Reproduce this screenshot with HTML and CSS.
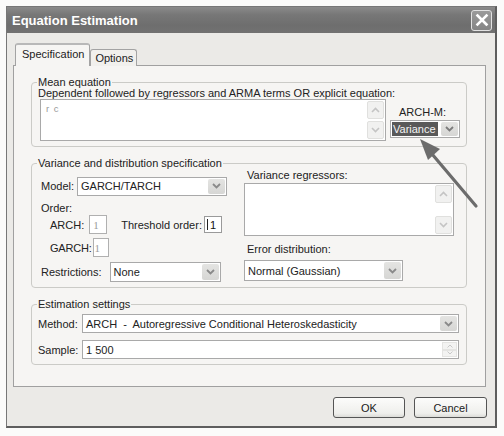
FILE: index.html
```html
<!DOCTYPE html>
<html>
<head>
<meta charset="utf-8">
<title>Equation Estimation</title>
<link rel="stylesheet" href="styles.css">
</head>
<body>
<div class="dialog">
  <div class="titlebar">
    <span class="title">Equation Estimation</span>
    <span class="close"><svg width="14" height="14" viewBox="0 0 14 14"><path d="M2.5 2.5 L11.5 11.5 M11.5 2.5 L2.5 11.5" stroke="#fff" stroke-width="2.6" stroke-linecap="square"/></svg></span>
  </div>
  <div class="body">
    <div class="tabs">
      <div class="tab active">Specification</div>
      <div class="tab">Options</div>
    </div>
    <div class="panel">
      <fieldset class="group mean">
        <legend>Mean equation</legend>
        <div class="desc">Dependent followed by regressors and ARMA terms OR explicit equation:</div>
        <div class="mean-row">
          <div class="field eq">
            <span class="eq-text">r c</span>
            <div class="vscroll">
              <span class="sbtn"><svg width="9" height="6" viewBox="0 0 9 6"><path d="M1 5 L4.5 1.5 L8 5" fill="none" stroke="#c4c4c4" stroke-width="1.6"/></svg></span>
              <span class="sbtn"><svg width="9" height="6" viewBox="0 0 9 6"><path d="M1 1 L4.5 4.5 L8 1" fill="none" stroke="#c4c4c4" stroke-width="1.6"/></svg></span>
            </div>
          </div>
          <div class="archm">
            <div class="archm-label">ARCH-M:</div>
            <div class="combo archm-combo">
              <span class="combo-val"><span class="sel">Variance</span></span>
              <span class="combo-btn"><svg width="9" height="6" viewBox="0 0 9 6"><path d="M1 1 L4.5 4.5 L8 1" fill="none" stroke="#7c7c7c" stroke-width="1.8"/></svg></span>
            </div>
          </div>
        </div>
      </fieldset>

      <fieldset class="group variance">
        <legend>Variance and distribution specification</legend>
        <div class="var-cols">
          <div class="var-left">
            <div class="row model-row">
              <span class="lbl">Model:</span>
              <div class="combo model-combo">
                <span class="combo-val">GARCH/TARCH</span>
                <span class="combo-btn"><svg width="9" height="6" viewBox="0 0 9 6"><path d="M1 1 L4.5 4.5 L8 1" fill="none" stroke="#8a8a8a" stroke-width="1.8"/></svg></span>
              </div>
            </div>
            <div class="order-lbl">Order:</div>
            <div class="row arch-row">
              <span class="lbl ind arch-lbl">ARCH:</span>
              <span class="num dim arch-in">1</span>
              <span class="lbl thr-lbl">Threshold order:</span>
              <span class="num thr-in"><span class="caret"></span>1</span>
            </div>
            <div class="row garch-row">
              <span class="lbl ind garch-lbl">GARCH:</span>
              <span class="num dim garch-in">1</span>
            </div>
            <div class="row restr-row">
              <span class="lbl restr-lbl">Restrictions:</span>
              <div class="combo restr-combo">
                <span class="combo-val">None</span>
                <span class="combo-btn"><svg width="9" height="6" viewBox="0 0 9 6"><path d="M1 1 L4.5 4.5 L8 1" fill="none" stroke="#8a8a8a" stroke-width="1.8"/></svg></span>
              </div>
            </div>
          </div>
          <div class="var-right">
            <div class="rlbl vr-lbl">Variance regressors:</div>
            <div class="field listbox">
              <div class="vscroll">
                <span class="sbtn"><svg width="9" height="6" viewBox="0 0 9 6"><path d="M1 5 L4.5 1.5 L8 5" fill="none" stroke="#c4c4c4" stroke-width="1.6"/></svg></span>
                <span class="sbtn"><svg width="9" height="6" viewBox="0 0 9 6"><path d="M1 1 L4.5 4.5 L8 1" fill="none" stroke="#c4c4c4" stroke-width="1.6"/></svg></span>
              </div>
            </div>
            <div class="rlbl ed-lbl">Error distribution:</div>
            <div class="combo err-combo">
              <span class="combo-val">Normal (Gaussian)</span>
              <span class="combo-btn"><svg width="9" height="6" viewBox="0 0 9 6"><path d="M1 1 L4.5 4.5 L8 1" fill="none" stroke="#8a8a8a" stroke-width="1.8"/></svg></span>
            </div>
          </div>
        </div>
      </fieldset>

      <fieldset class="group est">
        <legend>Estimation settings</legend>
        <div class="row method-row">
          <span class="lbl est-lbl">Method:</span>
          <div class="combo method-combo">
            <span class="combo-val">ARCH&nbsp; -&nbsp; Autoregressive Conditional Heteroskedasticity</span>
            <span class="combo-btn"><svg width="9" height="6" viewBox="0 0 9 6"><path d="M1 1 L4.5 4.5 L8 1" fill="none" stroke="#8a8a8a" stroke-width="1.8"/></svg></span>
          </div>
        </div>
        <div class="row sample-row">
          <span class="lbl est-lbl">Sample:</span>
          <div class="field sample">
            <span class="combo-val">1 500</span>
            <span class="spin">
              <span class="spin-b"><svg width="6" height="4" viewBox="0 0 6 4"><path d="M0.5 3.5 L3 1 L5.5 3.5" fill="none" stroke="#c8c8c8" stroke-width="1"/></svg></span>
              <span class="spin-b"><svg width="6" height="4" viewBox="0 0 6 4"><path d="M0.5 0.5 L3 3 L5.5 0.5" fill="none" stroke="#c8c8c8" stroke-width="1"/></svg></span>
            </span>
          </div>
        </div>
      </fieldset>
    </div>
    <div class="buttons">
      <button class="btn">OK</button>
      <button class="btn">Cancel</button>
    </div>
  </div>
</div>
<svg class="pointer" width="504" height="436" viewBox="0 0 504 436">
  <line x1="476" y1="206" x2="432" y2="154" stroke="#6c6c6c" stroke-width="3.2" stroke-linecap="round"/>
  <polygon points="420,139 440,149 428,160" fill="#6c6c6c"/>
</svg>
</body>
</html>
```

FILE: styles.css
```css
* { box-sizing: border-box; }
html, body { margin: 0; padding: 0; background: #fbfbfa; }
body {
  position: relative;
  width: 504px;
  height: 436px;
  overflow: hidden;
  font-family: "Liberation Sans", Arial, sans-serif;
  font-size: 11px;
  color: #222;
}
.dialog {
  margin: 6px 0 0 6px;
  width: 491px;
  height: 422px;
  border: 1px solid #777;
  border-right: 2px solid #5e5e5e;
  border-bottom: 2px solid #5e5e5e;
  background: #ebeae7;
  display: flex;
  flex-direction: column;
}
.titlebar {
  height: 26px;
  flex: none;
  background: linear-gradient(#8a8a8a, #777 30%, #6e6e6e 70%, #727272);
  display: flex;
  align-items: center;
  justify-content: space-between;
  padding: 0 3px 0 5px;
}
.title {
  color: #fff;
  font-weight: bold;
  font-size: 13px;
}
.close {
  width: 21px;
  height: 21px;
  border: 1px solid #e2e2e2;
  border-radius: 3px;
  background: linear-gradient(#9a9a9a, #858585);
  display: flex;
  align-items: center;
  justify-content: center;
}
.body {
  flex: 1;
  padding: 10px 9px 0 6px;
  display: flex;
  flex-direction: column;
}
.tabs {
  display: flex;
  align-items: flex-end;
  height: 23px;
  margin-bottom: -1px;
  position: relative;
  z-index: 1;
}
.tab {
  height: 17px;
  border: 1px solid #a3a3a3;
  border-bottom: none;
  border-radius: 3px 3px 0 0;
  background: #f1f0ed;
  padding: 2px 3px 0 4px;
  line-height: 13px;
}
.tab.active {
  height: 23px;
  margin-left: 2px;
  margin-right: 0;
  padding: 3px 5px 0 6px;
  background: #f6f5f3;
  border-top: 2px solid #b8b8b8;
}
.panel {
  height: 322px;
  border: 1px solid #a0a0a0;
  background: #f6f5f3;
  padding: 10px 0 0 17px;
}
.group {
  margin: 0;
  min-width: 0;
  width: 436px;
  border: 1px solid #cbcbc7;
  border-radius: 4px;
  padding: 0 6px 5px 6px;
}
.group legend {
  padding: 0 1px;
  margin-left: -1px;
  line-height: 13px;
}
.variance, .est { margin-top: 10px; }

.desc { line-height: 12px; margin-top: -2px; position: relative; z-index: 1; }
.mean-row { display: flex; margin-top: 0; }
.field {
  background: #fff;
  border: 1px solid #a9a9a9;
  position: relative;
}
.eq {
  margin-left: 2px;
  width: 347px;
  height: 42px;
  display: flex;
  justify-content: space-between;
}
.eq-text {
  font-family: "Liberation Sans", Arial, sans-serif;
  font-size: 9.5px;
  color: #9a9a9a;
  padding: 3px 0 0 5px;
  letter-spacing: 1px;
}
.vscroll {
  width: 18px;
  display: flex;
  flex-direction: column;
  justify-content: space-between;
  padding: 1px 1px 1px 0;
}
.sbtn {
  height: 18px;
  display: flex;
  align-items: center;
  justify-content: center;
  background: #f1f1f0;
  border: 1px solid #e0e0de;
  border-radius: 2px;
}
.archm { margin-left: 4px; display: flex; flex-direction: column; }
.archm-label { line-height: 13px; margin: 7px 0 0 9px; }
.combo {
  display: flex;
  align-items: stretch;
  background: #fff;
  border: 1px solid #a9a9a9;
  height: 20px;
}
.combo-val {
  flex: 1;
  display: flex;
  align-items: center;
  padding-left: 3px;
  white-space: nowrap;
  overflow: hidden;
}
.combo-btn {
  width: 17px;
  margin: 1px;
  background: linear-gradient(#e4e4e2, #d6d6d4);
  border-radius: 2px;
  display: flex;
  align-items: center;
  justify-content: center;
}
.archm-combo { width: 70px; height: 18px; margin-top: 1px; }
.archm-combo .combo-val { padding-left: 1px; }
.sel {
  background: #595959;
  color: #f4f4f4;
  padding: 0 2px 0 1px;
  line-height: 14px;
}

.var-cols { display: flex; }
.var-left { width: 206px; display: flex; flex-direction: column; padding-left: 3px; }
.var-right { width: 210px; display: flex; flex-direction: column; }
.row { display: flex; align-items: center; }
.model-row { margin-top: 6px; height: 20px; }
.model-combo { width: 150px; margin-left: 3px; height: 19px; }
.order-lbl { line-height: 13px; margin-top: 6px; }
.ind { margin-left: 9px; }
.arch-row { height: 19px; }
.num {
  display: flex;
  align-items: center;
  background: #fff;
  border: 1px solid #b0b0b0;
  height: 19px;
  font-family: "Liberation Serif", "Times New Roman", serif;
  font-size: 11px;
  padding-left: 3px;
}
.dim { color: #9b9b9b; }
.arch-in { width: 18px; margin-left: 5px; }
.thr-lbl { margin-left: 14px; }
.thr-in { width: 18px; height: 17px; margin-left: 2px; border-color: #9a9a9a; color: #111; font-family: "Liberation Sans", Arial, sans-serif; padding-left: 2px; }
.caret { width: 1px; height: 11px; background: #222; margin-right: 2px; }
.garch-row { margin-top: 4px; height: 19px; }
.garch-lbl { letter-spacing: -0.2px; }
.garch-in { width: 16px; margin-left: 1px; padding-left: 1px; }
.restr-row { margin-top: 5px; height: 20px; }
.restr-combo { width: 111px; margin-left: 8px; }

.rlbl { line-height: 13px; padding-left: 3px; }
.vr-lbl { margin-top: -1px; }
.listbox {
  margin-top: 1px;
  height: 53px;
  display: flex;
  justify-content: flex-end;
}
.ed-lbl { margin-top: 7px; }
.err-combo { width: 159px; height: 21px; margin-top: 4px; }

.method-row { margin-top: 3px; }
.est-lbl { width: 44px; }
.method-combo { width: 377px; height: 19px; }
.sample-row { margin-top: 7px; }
.sample { width: 377px; height: 19px; display: flex; }
.spin {
  width: 17px;
  display: flex;
  flex-direction: column;
  padding: 1px;
}
.spin-b {
  flex: 1;
  display: flex;
  align-items: center;
  justify-content: center;
  background: #f3f3f2;
  border: 1px solid #e4e4e2;
}

.buttons {
  display: flex;
  justify-content: flex-end;
  gap: 9px;
  margin-top: 10px;
  margin-right: -1px;
}
.btn {
  width: 72px;
  height: 21px;
  border: 1px solid #555;
  border-radius: 3px;
  background: linear-gradient(#fcfcfb, #efefec 80%, #dcdcd8);
  font-family: "Liberation Sans", Arial, sans-serif;
  font-size: 11px;
  color: #1a1a1a;
  padding: 0;
}
.btn + .btn { width: 73px; }

.pointer {
  position: absolute;
  left: 0;
  top: 0;
  pointer-events: none;
}
```
